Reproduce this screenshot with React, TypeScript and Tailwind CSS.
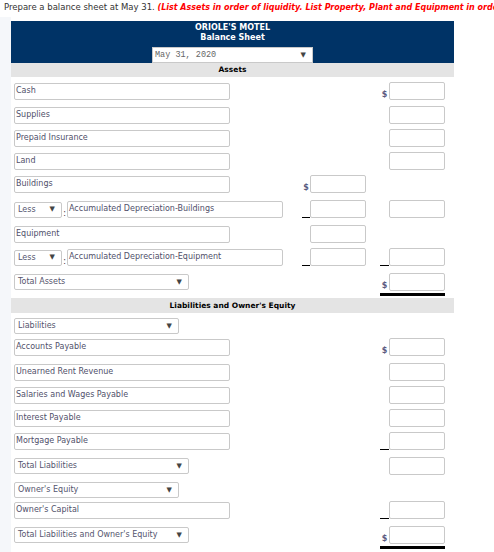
import React from "react";

const font = "font-['DejaVu_Sans','Liberation_Sans',sans-serif]";

function TextBox({ label, w = "w-[216px]" }: { label: string; w?: string }) {
  return (
    <div className={`${w} h-[17px] border border-[#c9c9c9] rounded-[2px] bg-white pl-[1px] flex items-center text-[8px] text-[#50506a] whitespace-nowrap overflow-hidden`}>
      {label}
    </div>
  );
}

function Select({ label, w }: { label: string; w: string }) {
  return (
    <div className={`${w} h-[16px] border border-[#c9c9c9] rounded-[2px] bg-white pl-[3px] pr-[6px] flex items-center justify-between text-[8px] text-[#55556e] whitespace-nowrap`}>
      <span>{label}</span>
      <span className="text-[7px] text-[#444]">▼</span>
    </div>
  );
}

type Prefix = "none" | "$" | "line";

function Amount({ prefix = "none", total = false, pw }: { prefix?: Prefix; total?: boolean; pw: string }) {
  return (
    <div className="relative flex items-end">
      <div className={`${pw} h-[18px] flex items-end`}>
        {prefix === "line" && <div className="w-full h-[1px] bg-black" />}
        {prefix === "$" && (
          <span className="w-full text-center text-[8px] leading-[10px] font-bold text-[#5a5a80]">$</span>
        )}
      </div>
      <div className="w-[56px] h-[18px] border border-[#c9c9c9] rounded-[2px] bg-white" />
      {total && <div className="absolute left-0 right-0 -bottom-[5px] h-[3px] bg-black" />}
    </div>
  );
}

function Row({
  mt,
  left,
  mid,
  right,
}: {
  mt: string;
  left: React.ReactNode;
  mid?: React.ReactNode;
  right?: React.ReactNode;
}) {
  return (
    <div className={`${mt} flex items-center h-[18px]`}>
      <div className="w-[291px] pl-[3px] flex items-center">{left}</div>
      <div className="w-[64px] flex">{mid}</div>
      <div className="w-[14px]" />
      <div className="w-[65px] flex">{right}</div>
    </div>
  );
}

function LessRow({ mt, label, mid, right }: { mt: string; label: string; mid?: React.ReactNode; right?: React.ReactNode }) {
  return (
    <Row
      mt={mt}
      left={
        <div className="flex items-end">
          <Select label="Less" w="w-[48px]" />
          <span className="w-[5px] text-[8px] leading-[9px] text-[#333] text-center">:</span>
          <TextBox label={label} />
        </div>
      }
      mid={mid}
      right={right}
    />
  );
}

const B = (p: Prefix = "none") => <Amount prefix={p} pw="w-[8px]" />;
const C = (p: Prefix = "none", total = false) => <Amount prefix={p} total={total} pw="w-[9px]" />;

export default function App() {
  return (
    <div className={`w-[494px] h-[552px] bg-white overflow-hidden ${font}`}>
      <div className="h-[17px] pl-[4px] pt-[1px] text-[8.5px] whitespace-nowrap overflow-hidden text-[#333]">
        Prepare a balance sheet at May 31.{" "}
        <span className="text-[8px] text-[#ff0000] font-bold italic">
          (List Assets in order of liquidity. List Property, Plant and Equipment in order of their useful lives.)
        </span>
      </div>
      <div className="flex h-[535px]">
        <div className="w-[11px] bg-[#f5f7fa]" />
        <div className="w-[443px] pt-[4px]">
          <div className="h-[42px] bg-[#003366] flex flex-col items-center pt-[2px] text-white font-bold text-[8px] leading-[10px]">
            <div>ORIOLE'S MOTEL</div>
            <div>Balance Sheet</div>
            <div className="mt-[4px] w-[161px] h-[16px] bg-white border border-[#c9c9c9] pl-[2px] pr-[6px] flex items-center justify-between font-normal">
              <span className="font-['Liberation_Mono','DejaVu_Sans_Mono',monospace] text-[8.5px] text-[#666]">May 31, 2020</span>
              <span className="text-[7px] text-[#444]">▼</span>
            </div>
          </div>
          <div className="h-[14px] bg-[#e4e4e4] flex items-center justify-center text-[7.5px] font-bold text-black">Assets</div>

          <Row mt="mt-[5px]" left={<TextBox label="Cash" />} right={C("$")} />
          <Row mt="mt-[6px]" left={<TextBox label="Supplies" />} right={C()} />
          <Row mt="mt-[5px]" left={<TextBox label="Prepaid Insurance" />} right={C()} />
          <Row mt="mt-[5px]" left={<TextBox label="Land" />} right={C()} />
          <Row mt="mt-[5px]" left={<TextBox label="Buildings" />} mid={B("$")} />
          <LessRow mt="mt-[7px]" label="Accumulated Depreciation-Buildings" mid={B("line")} right={C()} />
          <Row mt="mt-[7px]" left={<TextBox label="Equipment" />} mid={B()} />
          <LessRow mt="mt-[5px]" label="Accumulated Depreciation-Equipment" mid={B("line")} right={C("line")} />
          <Row mt="mt-[7px]" left={<Select label="Total Assets" w="w-[175px]" />} right={C("$", true)} />

          <div className="mt-[7px] h-[15px] bg-[#e4e4e4] flex items-center justify-center text-[7.5px] font-bold text-black">
            Liabilities and Owner's Equity
          </div>

          <Row mt="mt-[4px]" left={<Select label="Liabilities" w="w-[165px]" />} />
          <Row mt="mt-[3px]" left={<TextBox label="Accounts Payable" />} right={C("$")} />
          <Row mt="mt-[7px]" left={<TextBox label="Unearned Rent Revenue" />} right={C()} />
          <Row mt="mt-[5px]" left={<TextBox label="Salaries and Wages Payable" />} right={C()} />
          <Row mt="mt-[5px]" left={<TextBox label="Interest Payable" />} right={C()} />
          <Row mt="mt-[5px]" left={<TextBox label="Mortgage Payable" />} right={C("line")} />
          <Row mt="mt-[7px]" left={<Select label="Total Liabilities" w="w-[175px]" />} right={C()} />
          <Row mt="mt-[6px]" left={<Select label="Owner's Equity" w="w-[165px]" />} />
          <Row mt="mt-[2px]" left={<TextBox label="Owner's Capital" />} right={C("line")} />
          <Row mt="mt-[7px]" left={<Select label="Total Liabilities and Owner's Equity" w="w-[175px]" />} right={C("$", true)} />
        </div>
      </div>
    </div>
  );
}
